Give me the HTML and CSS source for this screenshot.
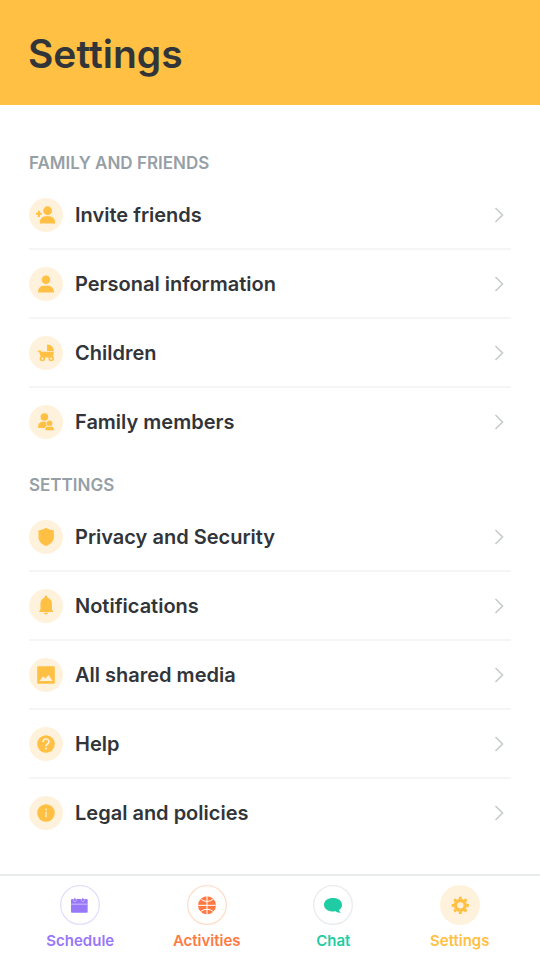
FILE: index.html
```html
<!DOCTYPE html>
<html lang="en">
<head>
<meta charset="utf-8">
<meta name="viewport" content="width=device-width, initial-scale=1">
<title>Settings</title>
<link rel="stylesheet" href="styles.css">
</head>
<body>
<svg class="defs" aria-hidden="true">
  <symbol id="chevron" viewBox="0 0 10 16"><path d="M1.5 1 8.5 8 1.5 15" fill="none" stroke="currentColor" stroke-width="1.7"/></symbol>
</svg>
<header class="header"><h1>Settings</h1></header>
<main class="content">
  <section>
    <h2 class="label">FAMILY AND FRIENDS</h2>
    <ul class="list">
      <li><a class="row" href="#invite">
        <svg class="icon" viewBox="0 0 104 104" aria-hidden="true"><circle cx="57" cy="39" r="13.5"/><path d="M33 78v-4c0-11 9-18 19-18h9c10 0 19 7 19 18v4zM27 39h6v6h6v6h-6v7h-6v-7h-6v-6h6z"/></svg>
        <span class="name">Invite friends</span><svg class="chevron" aria-hidden="true"><use href="#chevron"/></svg></a></li>
      <li><a class="row" href="#personal">
        <svg class="icon" viewBox="0 0 104 104" aria-hidden="true"><circle cx="52" cy="39" r="13"/><path d="M28 78v-4c0-11 9-17 19-17h10c10 0 19 6 19 17v4z"/></svg>
        <span class="name">Personal information</span><svg class="chevron" aria-hidden="true"><use href="#chevron"/></svg></a></li>
      <li><a class="row" href="#children">
        <svg class="icon" viewBox="0 0 104 104" aria-hidden="true"><path d="M55 26c12 0 21 8 21 20H55zM27 44h7c2 0 3 1 4 4h38c0 9-4 15-8 18H41c-5-3-8-7-9-15l-1-3h-4z"/><circle class="wheel" cx="41" cy="69" r="6"/><circle class="wheel" cx="68" cy="69" r="6"/></svg>
        <span class="name">Children</span><svg class="chevron" aria-hidden="true"><use href="#chevron"/></svg></a></li>
      <li><a class="row" href="#family">
        <svg class="icon" viewBox="0 0 104 104" aria-hidden="true"><circle cx="47" cy="37" r="11.5"/><path d="M28 70v-5c0-9 7-14 14-14h9c8 0 14 5 14 14v5z"/><g class="cutout"><path d="M50 77v-3c0-6 5-9 10-9h6c6 0 10 3 10 9v3z"/><circle cx="63" cy="56" r="8.5"/></g></svg>
        <span class="name">Family members</span><svg class="chevron" aria-hidden="true"><use href="#chevron"/></svg></a></li>
    </ul>
  </section>
  <section>
    <h2 class="label">SETTINGS</h2>
    <ul class="list">
      <li><a class="row" href="#privacy">
        <svg class="icon" viewBox="0 0 104 104" aria-hidden="true"><path d="M52 24c7 5 15 7 24 8v20c0 13-10 22-24 28-14-6-23-15-23-28V32c9-1 16-3 23-8z"/></svg>
        <span class="name">Privacy and Security</span><svg class="chevron" aria-hidden="true"><use href="#chevron"/></svg></a></li>
      <li><a class="row" href="#notifications">
        <svg class="icon" viewBox="0 0 104 104" aria-hidden="true"><path d="M52 20c3 0 4 3 5 7 9 3 13 9 13 19v17c0 3 4 3 4 7H31c0-4 4-4 4-7V46c0-10 4-16 12-19 1-4 2-7 5-7zM45 73h14c-2 7-12 7-14 0z"/></svg>
        <span class="name">Notifications</span><svg class="chevron" aria-hidden="true"><use href="#chevron"/></svg></a></li>
      <li><a class="row" href="#media">
        <svg class="icon" viewBox="0 0 104 104" aria-hidden="true"><rect x="25" y="25" width="54" height="54" rx="4"/><path class="light" d="M32 70 43 56l7 7 10-11 12 18z"/></svg>
        <span class="name">All shared media</span><svg class="chevron" aria-hidden="true"><use href="#chevron"/></svg></a></li>
      <li><a class="row" href="#help">
        <svg class="icon" viewBox="0 0 104 104" aria-hidden="true"><circle cx="52" cy="52" r="27"/><path class="line" d="M43 46c0-12 18-12 18-1 0 7-9 7-9 14"/><circle class="light" cx="52" cy="66" r="3"/></svg>
        <span class="name">Help</span><svg class="chevron" aria-hidden="true"><use href="#chevron"/></svg></a></li>
      <li><a class="row" href="#legal">
        <svg class="icon" viewBox="0 0 104 104" aria-hidden="true"><circle cx="52" cy="52" r="27"/><circle class="light" cx="52" cy="41" r="2.7"/><path class="light" d="M50 48h4v17h-4z"/></svg>
        <span class="name">Legal and policies</span><svg class="chevron" aria-hidden="true"><use href="#chevron"/></svg></a></li>
    </ul>
  </section>
</main>
<nav class="tabs" aria-label="Main">
  <a class="tab schedule" href="#schedule">
    <svg viewBox="0 0 120 120" aria-hidden="true"><circle class="ring" cx="60" cy="60" r="58"/><rect x="33" y="42" width="50" height="41" rx="3"/><path class="rule" d="M33 57.500h50"/><path class="detail" d="M40 42v4c0 5 9 5 9 0v-4M64 42v4c0 5 9 5 9 0v-4"/><path d="M43 39h3v8h-3zM67 39h3v8h-3z"/></svg>
    <span>Schedule</span></a>
  <a class="tab activities" href="#activities">
    <svg viewBox="0 0 120 120" aria-hidden="true"><circle class="ring" cx="60" cy="60" r="58"/><circle cx="60" cy="61" r="27"/><path class="seam" d="M60 33v56M32 61h56M39 40c10 12 32 12 42 0M39 82c10-12 32-12 42 0"/></svg>
    <span>Activities</span></a>
  <a class="tab chat" href="#chat">
    <svg viewBox="0 0 120 120" aria-hidden="true"><circle class="ring" cx="60" cy="60" r="58"/><path d="M60 39c15 0 27 8 27 20 0 7-3 12-9 16 1 4 3 6 6 8-7 1-13-1-17-4-18 2-34-5-34-20 0-12 12-20 27-20z"/></svg>
    <span>Chat</span></a>
  <a class="tab settings" href="#settings" aria-current="page">
    <svg viewBox="0 0 120 120" aria-hidden="true"><circle class="disc" cx="60" cy="60" r="60"/><g transform="translate(61 61)"><circle class="gear" r="14.500"/><path id="tooth" d="M-5-18-4-26h8L5-18z"/><use href="#tooth" transform="rotate(45)"/><use href="#tooth" transform="rotate(90)"/><use href="#tooth" transform="rotate(135)"/><use href="#tooth" transform="rotate(180)"/><use href="#tooth" transform="rotate(225)"/><use href="#tooth" transform="rotate(270)"/><use href="#tooth" transform="rotate(315)"/></g></svg>
    <span>Settings</span></a>
</nav>
</body>
</html>
```
FILE: styles.css
```css
* { box-sizing: border-box; }
body {
  margin: 0;
  min-height: 100vh;
  display: flex;
  flex-direction: column;
  background: #fff;
  color: #313539;
  font-family: Inter, "Liberation Sans", sans-serif;
}
a { color: inherit; text-decoration: none; }
.defs { position: absolute; width: 0; height: 0; }
.header { background: #ffc043; padding: 28px 28px 25px; }
h1 { margin: 0; font-size: 39px; line-height: 52px; font-weight: 600; }
.content { flex: 1; padding: 46px 29px 0; }
.label {
  margin: 0;
  padding-bottom: 6px;
  font-size: 17px;
  line-height: 24px;
  font-weight: 600;
  color: #969fa6;
}
section + section { padding-top: 16px; }
.list { margin: 0; padding: 0; list-style: none; }
.row {
  display: flex;
  align-items: center;
  gap: 12px;
  height: 69px;
  border-bottom: 2px solid #f4f5f6;
}
li:last-child .row { border-bottom-color: transparent; }
.name { flex: 1; font-size: 20px; line-height: 28px; font-weight: 600; }
.icon { width: 34px; height: 34px; border-radius: 50%; background: #fff2dc; fill: #ffc043; }
.wheel { fill: #fff2dc; stroke: #ffc043; stroke-width: 5; }
.cutout { stroke: #fff2dc; stroke-width: 4; paint-order: stroke; }
.light { fill: #fff2dc; }
.line { fill: none; stroke: #fff2dc; stroke-width: 5; }
.chevron { width: 10px; height: 16px; margin-right: 7px; color: #c8cccf; }
.tabs {
  display: grid;
  grid-template-columns: repeat(4, 1fr);
  height: 86px;
  padding: 9px 17px 0;
  border-top: 2px solid #e8ecee;
}
.tab {
  display: flex;
  flex-direction: column;
  align-items: center;
  gap: 6px;
  font-size: 15px;
  line-height: 20px;
  font-weight: 600;
}
.tab svg { width: 40px; height: 40px; fill: currentColor; }
.tab .ring { fill: #fff; stroke: #e8ecee; stroke-width: 4; }
.tab .disc { fill: #fff2dc; }
.tab .gear { fill: none; stroke: currentColor; stroke-width: 10; }
.rule { stroke: #cbbcfb; stroke-width: 3; }
.detail { fill: none; stroke: #d9cefd; stroke-width: 2; }
.seam { fill: none; stroke: #fff; stroke-width: 3; }
.schedule { color: #9878f8; }
.schedule .ring { stroke: #e5defd; }
.activities { color: #ff7a43; }
.activities .ring { stroke: #ffdfcb; }
.chat { color: #1fcca4; }
.settings { color: #ffc043; }
```
